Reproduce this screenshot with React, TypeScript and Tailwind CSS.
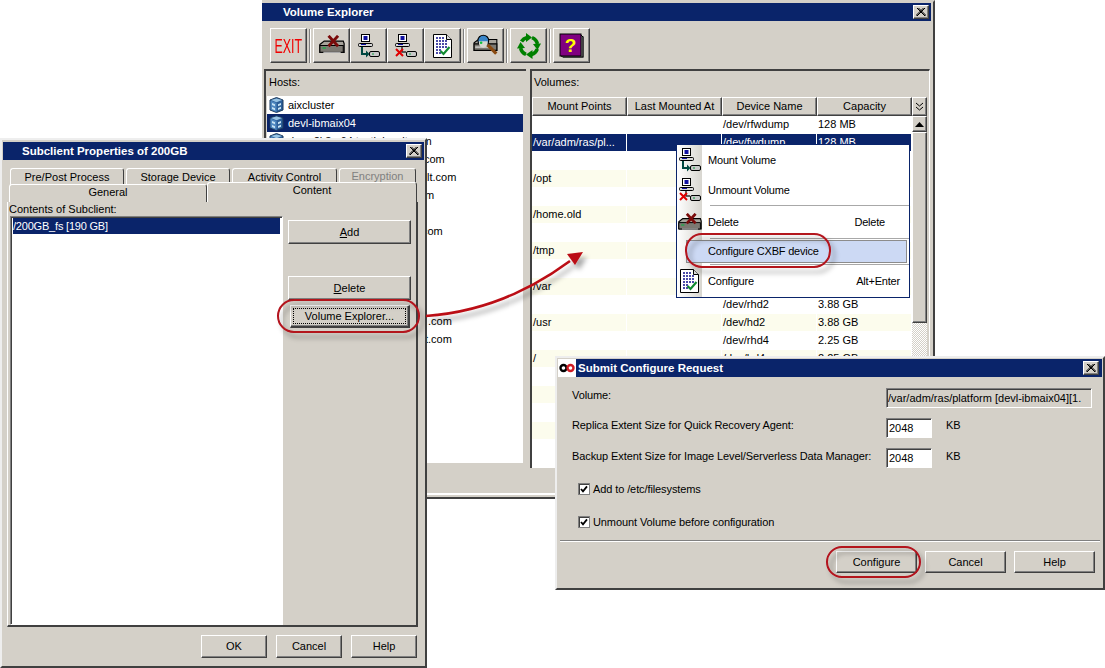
import type { ReactNode } from 'react'

const raised = 'bg-[#d4d0c8] border border-t-white border-l-white border-r-[#404040] border-b-[#404040] shadow-[inset_-1px_-1px_0_#808080]'
const sunken = 'border border-t-[#808080] border-l-[#808080] border-r-white border-b-white shadow-[inset_1px_1px_0_#404040]'

function Btn({ className = '', children }: { className?: string; children?: ReactNode }) {
  return <div className={`flex shrink-0 items-center justify-center ${raised} ${className}`}>{children}</div>
}

function CloseBtn({ className = '' }: { className?: string }) {
  return (
    <Btn className={`h-[14px] w-[16px] ${className}`}>
      <svg width="10" height="8" viewBox="0 0 10 8">
        <path d="M1 0l8 8M2.5 0l8 8M9 0L1 8M7.5 0l-8 8" stroke="#000" strokeWidth="1" />
      </svg>
    </Btn>
  )
}

function DriveX({ size = 28 }: { size?: number }) {
  return (
    <svg width={size} height={size * 0.8} viewBox="0 0 30 24">
      <path d="M1 11L6 7h22l1 3v10H1z" fill="#a8a49c" stroke="#000" strokeWidth="1.4" />
      <path d="M1 12h27v8H1z" fill="#7c7972" stroke="#000" strokeWidth="1.2" />
      <path d="M4 15h4" stroke="#10b040" strokeWidth="1.5" />
      <path d="M5 20h20" stroke="#e8e8e8" strokeWidth="1" />
      <path d="M11 1l11 12M22 1L11 13" stroke="#7a0a0a" strokeWidth="3.4" />
    </svg>
  )
}

function MountIcon({ x = false }: { x?: boolean }) {
  return (
    <svg width="22" height="24" viewBox="0 0 22 24">
      <rect x="3.5" y="0.5" width="8" height="7" fill="#fff" stroke="#000" />
      <rect x="5.5" y="2" width="4" height="4" fill="#1010a0" />
      <rect x="0.5" y="9.5" width="14" height="3" rx="1" fill="#d8d8d8" stroke="#000" />
      <path d="M3 10.5h5" stroke="#1010a0" />
      <rect x="11.5" y="17.5" width="10" height="5" rx="1.5" fill="#c8c8c8" stroke="#000" />
      <path d="M14 20h2" stroke="#10a040" />
      {x ? (
        <>
          <path d="M7 13v5h4" fill="none" stroke="#333" strokeWidth="1.5" />
          <path d="M1 15l7 7M8 15l-7 7" stroke="#e00000" strokeWidth="2" />
        </>
      ) : (
        <>
          <path d="M4 13v7h5" fill="none" stroke="#004840" strokeWidth="2" />
          <path d="M8 16.5v7l3.5-3.5z" fill="#004840" />
        </>
      )}
    </svg>
  )
}

function DocIcon() {
  return (
    <svg width="19" height="24" viewBox="0 0 19 24">
      <path d="M0.5 0.5h13l5 5v18H0.5z" fill="#fff" stroke="#000" />
      <path d="M13.5 0.5v5h5" fill="#ddd" stroke="#000" />
      <path d="M3 4h8M3 7h12M3 10h12M3 13h12M3 16h6M3 19h5" stroke="#10108a" strokeWidth="1.4" strokeDasharray="2 1" />
      <path d="M7.5 17l3 3 6-7" fill="none" stroke="#108a30" strokeWidth="2.2" />
    </svg>
  )
}

function SearchIcon() {
  return (
    <svg width="24" height="24" viewBox="0 0 24 24" className="h-[26px] w-[26px]">
      <path d="M1 9L5 6h17v10H1z" fill="#a8a49c" stroke="#000" />
      <path d="M1 10h21v6H1z" fill="#7c7972" stroke="#000" />
      <path d="M2 13h14" stroke="#e8e8e8" />
      <circle cx="9.5" cy="7" r="5" fill="#3a86c8" stroke="#000" />
      <path d="M5.5 7.5h8v2a4 4 0 0 1-8 0z" fill="#d8d8d0" />
      <circle cx="7.5" cy="9" r="1.2" fill="#10c040" />
      <path d="M13.5 11l8 8" stroke="#8a4a10" strokeWidth="3" />
    </svg>
  )
}

function RefreshIcon() {
  return (
    <svg width="24" height="26" viewBox="0 0 24 26">
      <g fill="none" stroke="#008000" strokeWidth="3.6">
        <path d="M4.5 8.5A9 9 0 0 1 10 4.4" />
        <path d="M15 4.6A9 9 0 0 1 20.5 11" />
        <path d="M20.3 16A9 9 0 0 1 14.5 21.6" />
        <path d="M9 21.4A9 9 0 0 1 3.6 15" />
      </g>
      <g fill="#008000">
        <path d="M9 0l6 4.5L9 9z" />
        <path d="M24 10.5l-3.5 6.5-4.5-6z" />
        <path d="M15.5 26l-6.5-4.5 6.5-4.5z" />
        <path d="M0 15.5l3.5-6.5 4.5 6z" />
      </g>
    </svg>
  )
}

function HelpBook() {
  return (
    <svg width="26" height="26" viewBox="0 0 26 26">
      <rect x="4" y="3" width="21" height="22" fill="#808080" />
      <rect x="1" y="1" width="21" height="22" fill="#800080" stroke="#000" />
      <path d="M22 2l2 2v20H4l-2-1" fill="none" stroke="#000" />
      <text x="11.5" y="19" textAnchor="middle" fontSize="19" fontWeight="700" fill="#ffff00" fontFamily="Liberation Sans">?</text>
    </svg>
  )
}

function HostIcon() {
  return (
    <svg width="15" height="16" viewBox="0 0 15 16" className="shrink-0">
      <path d="M7.5 0.5L14 3v10l-6.5 2.5L1 13V3z" fill="#2c5f98" stroke="#1c3a5c" />
      <path d="M1.5 3.5l6 2.5v9l-6-2.5z" fill="#4f88c0" />
      <path d="M7.5 1.5L13 3 7.5 5.2 2 3z" fill="#98c4e4" />
      <path d="M3 6l3 1.2v2L3 8zM9 7.2l3-1.2v2L9 9.2zM9 11l3-1.2v2L9 13zM3 10l3 1.2v2L3 12z" fill="#c8e4f4" />
    </svg>
  )
}

function Logo() {
  return (
    <div className="flex h-[18px] w-[18px] shrink-0 items-center justify-center bg-white">
      <svg width="16" height="10" viewBox="0 0 16 10">
        <circle cx="4.5" cy="5" r="3" fill="none" stroke="#000" strokeWidth="2.4" />
        <circle cx="11.5" cy="5" r="3" fill="none" stroke="#d01c24" strokeWidth="2.4" />
      </svg>
    </div>
  )
}

function ToolSep() {
  return <div className="mx-[2px] h-[34px] w-[2px] shrink-0 border-l border-r border-l-[#808080] border-r-white" />
}

function Toolbar() {
  const tb = 'h-[35px] w-[37px]'
  return (
    <div className="ml-[8px] mt-[7px] flex h-[35px] items-center">
      <Btn className={tb}>
        <span className="origin-center scale-x-[0.62] text-[20px] leading-none text-[#f00000]">EXIT</span>
      </Btn>
      <ToolSep />
      <Btn className={tb}><DriveX size={26} /></Btn>
      <Btn className={tb}><MountIcon /></Btn>
      <Btn className={tb}><MountIcon x /></Btn>
      <Btn className={tb}><DocIcon /></Btn>
      <ToolSep />
      <Btn className={tb}><SearchIcon /></Btn>
      <ToolSep />
      <Btn className={tb}><RefreshIcon /></Btn>
      <ToolSep />
      <Btn className={tb}><HelpBook /></Btn>
    </div>
  )
}

const hostFragments = [
  { text: 'com', pad: 'pl-[157px]' },
  { text: 'lt.com', pad: 'pl-[160px]' },
  { text: 'm', pad: 'pl-[158px]' },
  { text: '', pad: '' },
  { text: 'com', pad: 'pl-[155px]' },
  { text: '', pad: '' },
  { text: '', pad: '' },
  { text: '', pad: '' },
  { text: '', pad: '' },
  { text: '.com', pad: 'pl-[161px]' },
  { text: 't.com', pad: 'pl-[158px]' },
]

function HostsPane() {
  return (
    <div className="flex h-[399px] w-[262px] flex-col border-l-2 border-t-2 border-l-[#404040] border-t-[#404040]">
      <div className="flex h-[25px] items-center pb-[3px] pl-[3px]">Hosts:</div>
      <div className="ml-[1px] mr-[1px] flex h-[369px] flex-col overflow-hidden border-b-2 border-r-2 border-b-[#d4d0c8] border-r-[#d4d0c8] bg-white">
        <div className="flex h-[18px] shrink-0 items-center gap-[4px] pl-[2px]"><HostIcon />aixcluster</div>
        <div className="flex h-[18px] shrink-0 items-center gap-[4px] bg-[#0a246a] pl-[2px] text-white"><HostIcon />devl-ibmaix04</div>
        <div className="flex h-[18px] shrink-0 items-center gap-[4px] whitespace-nowrap pl-[2px]"><HostIcon />devw2k3-x64.testlab.cvlt.com</div>
        {hostFragments.map((h, i) => (
          <div key={i} className={`flex h-[18px] shrink-0 items-center ${h.pad}`}>{h.text}</div>
        ))}
      </div>
    </div>
  )
}

const volumeRows = [
  ['', '', '/dev/rfwdump', '128 MB'],
  ['/var/adm/ras/pl...', '', '/dev/fwdump', '128 MB'],
  ['', '', '', ''],
  ['/opt', '', '', ''],
  ['', '', '', ''],
  ['/home.old', '', '', ''],
  ['', '', '', ''],
  ['/tmp', '', '', ''],
  ['', '', '', ''],
  ['/var', '', '', ''],
  ['', '', '/dev/rhd2', '3.88 GB'],
  ['/usr', '', '/dev/hd2', '3.88 GB'],
  ['', '', '/dev/rhd4', '2.25 GB'],
  ['/', '', '/dev/hd4', '2.25 GB'],
  ['', '', '', ''],
  ['', '', '', ''],
  ['', '', '', ''],
  ['', '', '', ''],
  ['', '', '', ''],
]

function VolumesPane() {
  const columns = ['Mount Points', 'Last Mounted At', 'Device Name', 'Capacity']
  return (
    <div className="ml-[4px] flex h-[399px] w-[400px] flex-col border-l-2 border-r border-t-2 border-l-[#404040] border-r-white border-t-[#404040]">
      <div className="flex h-[26px] items-center pb-[3px] pl-[2px]">Volumes:</div>
      <div className="flex h-[371px] flex-col overflow-hidden">
        <div className="flex h-[19px] shrink-0">
          {columns.map((c) => (
            <Btn key={c} className="h-[19px] w-[95px]">{c}</Btn>
          ))}
          <Btn className="h-[19px] w-[15px]">
            <svg width="9" height="9" viewBox="0 0 9 9"><path d="M1 1l3.5 3L8 1M1 5l3.5 3L8 5" fill="none" stroke="#000" /></svg>
          </Btn>
        </div>
        <div className="flex min-h-0 flex-1">
          <div className="w-[380px] overflow-hidden bg-white">
            {volumeRows.map((r, i) => (
              <div key={i} className={`flex h-[18px] items-stretch border-b border-white ${i === 1 ? 'bg-[#0a246a] text-white' : i % 2 === 1 ? 'bg-[#fcfced]' : 'bg-white'}`}>
                {r.map((c, j) => (
                  <div key={j} className="flex w-[95px] items-center border-r border-white pl-[1px]">{c}</div>
                ))}
              </div>
            ))}
          </div>
          <div className="flex w-[15px] flex-col bg-[repeating-conic-gradient(#d4d0c8_0_25%,#ffffff_0_50%)] bg-[length:2px_2px]">
            <Btn className="h-[16px]">
              <svg width="9" height="5" viewBox="0 0 9 5"><path d="M4.5 0L9 5H0z" fill="#000" /></svg>
            </Btn>
            <Btn className="h-[191px]" />
          </div>
        </div>
      </div>
    </div>
  )
}

function VolumeExplorer() {
  return (
    <div className="absolute left-[262px] top-0 flex h-[499px] w-[673px] flex-col border-b-2 border-r-2 border-t-2 border-b-[#404040] border-r-[#404040] border-t-[#d4d0c8] bg-[#d4d0c8] pr-[2px] pt-[1px]">
      <div className="flex h-[18px] shrink-0 items-center justify-between bg-[#0a246a] pl-[21px] pr-[2px] text-white">
        <span className="pt-[1px] text-[11.5px] font-bold">Volume Explorer</span>
        <CloseBtn />
      </div>
      <Toolbar />
      <div className="ml-[2px] mt-[6px] flex">
        <HostsPane />
        <VolumesPane />
      </div>
      <div className="mt-[25px] h-[2px] shrink-0 bg-white" />
    </div>
  )
}

function ContextMenu() {
  const strip = 'flex w-[25px] shrink-0 items-center justify-center'
  const sep = 'ml-[33px] h-[1px] bg-[#a8a8a8]'
  return (
    <div className="absolute left-[676px] top-[144px] h-[154px] w-[234px] overflow-hidden border border-[#0a246a] bg-white tracking-[-0.2px]">
      <div className="absolute bottom-0 left-0 top-0 w-[25px] bg-gradient-to-r from-white to-[#d8d6d0]" />
      <div className="relative flex h-full flex-col">
        <div className="flex h-[30px] items-center"><div className={strip}><MountIcon /></div><span className="ml-[6px]">Mount Volume</span></div>
        <div className="flex h-[30px] items-center"><div className={strip}><MountIcon x /></div><span className="ml-[6px]">Unmount Volume</span></div>
        <div className={sep} />
        <div className="flex h-[32px] items-center pt-[1px]"><div className={strip}><DriveX size={24} /></div><span className="ml-[6px]">Delete</span><span className="ml-auto mr-[24px]">Delete</span></div>
        <div className={sep} />
        <div className="ml-[9px] mr-[2px] mt-[1px] flex h-[23px] items-center border border-[#8c8c8c] bg-[#ccd9f4] pl-[21px]">Configure CXBF device</div>
        <div className={`${sep} mt-[1px]`} />
        <div className="flex h-[31px] items-center pt-[1px]"><div className={strip}><DocIcon /></div><span className="ml-[6px]">Configure</span><span className="ml-auto mr-[9px]">Alt+Enter</span></div>
      </div>
    </div>
  )
}

function Tab({ className = '', children, disabled }: { className?: string; children: ReactNode; disabled?: boolean }) {
  return (
    <div className={`flex items-start justify-center rounded-t-[3px] border-l border-r border-t border-l-white border-r-[#404040] border-t-white bg-[#d4d0c8] ${disabled ? 'text-[#808080]' : ''} ${className}`}>
      {children}
    </div>
  )
}

function Subclient() {
  const foot = 'h-[23px] w-[66px]'
  return (
    <div className="absolute left-0 top-[138px] flex h-[530px] w-[427px] flex-col border-2 border-b-[#404040] border-l-[#eeeeee] border-r-[#404040] border-t-[#eeeeee] bg-[#d4d0c8] p-[1px] pt-[2px]">
      <div className="flex h-[18px] shrink-0 items-center justify-between bg-[#0a246a] pl-[19px] pr-[2px] text-white">
        <span className="pt-[1px] text-[11.5px] font-bold">Subclient Properties of 200GB</span>
        <CloseBtn />
      </div>
      <div className="relative ml-[7px] mt-[8px] flex h-[17px] gap-[2px]">
        <Tab className="h-[17px] w-[114px] pt-[3px]">Pre/Post Process</Tab>
        <Tab className="h-[17px] w-[104px] pt-[3px]">Storage Device</Tab>
        <Tab className="h-[17px] w-[105px] pt-[3px]">Activity Control</Tab>
        <Tab className="h-[17px] w-[77px] pt-[2px]" disabled>Encryption</Tab>
      </div>
      <div className="relative ml-[6px] mt-[-3px] flex h-[20px] items-end">
        <Tab className="h-[18px] w-[198px] pt-[2px]">General</Tab>
        <Tab className="h-[20px] w-[210px] pt-[2px]">Content</Tab>
      </div>
      <div className="ml-[4px] flex h-[425px] w-[411px] flex-col border-b-2 border-l border-r-2 border-b-[#404040] border-l-white border-r-[#404040]">
        <div className="flex h-[14px] shrink-0 items-center pl-[1px]">Contents of Subclient:</div>
        <div className="flex">
          <div className={`ml-[2px] h-[409px] w-[273px] bg-white p-[2px] pt-[1px] ${sunken}`}>
            <div className="flex h-[16px] items-center bg-[#0a246a] tracking-[-0.2px] text-white">/200GB_fs [190 GB]</div>
          </div>
          <div className="ml-[5px] flex flex-col">
            <Btn className="mt-[4px] h-[24px] w-[123px]"><span><span className="underline">A</span>dd</span></Btn>
            <Btn className="mt-[32px] h-[24px] w-[123px]"><span><span className="underline">D</span>elete</span></Btn>
            <Btn className="ml-[2px] mt-[5px] h-[23px] w-[120px] border-b-2 border-r-2 border-b-[#404040] border-r-[#404040] p-[2px]">
              <div className="flex h-full w-full items-center justify-center border border-dotted border-black">Volume Explorer...</div>
            </Btn>
          </div>
        </div>
      </div>
      <div className="mt-[8px] flex justify-end gap-[9px] pr-[7px]">
        <Btn className={foot}>OK</Btn>
        <Btn className={foot}>Cancel</Btn>
        <Btn className={foot}>Help</Btn>
      </div>
    </div>
  )
}

function SubmitDialog() {
  const foot = 'h-[22px] w-[81px]'
  const label = 'w-[328px] shrink-0 whitespace-nowrap pl-[14px] tracking-[-0.1px]'
  const input = `flex h-[20px] w-[46px] items-center bg-white pl-[2px] ${sunken}`
  const check = 'flex h-[12px] w-[12px] shrink-0 items-center justify-center border border-[#808080] bg-white shadow-[inset_1px_1px_0_#404040]'
  const tick = <svg width="8" height="8" viewBox="0 0 8 8"><path d="M1 4l2 2.4L7 1.4" fill="none" stroke="#000" strokeWidth="1.8" /></svg>
  return (
    <div className="absolute left-[555px] top-[356px] flex h-[234px] w-[550px] flex-col border-2 border-b-[#404040] border-l-[#eeeeee] border-r-[#404040] border-t-[#eeeeee] bg-[#d4d0c8] p-[1px]">
      <div className="flex h-[18px] shrink-0 items-center justify-between bg-[#0a246a] pr-[3px] text-white">
        <div className="flex items-center gap-[2px]">
          <Logo />
          <span className="pt-[1px] text-[11.5px] font-bold">Submit Configure Request</span>
        </div>
        <CloseBtn className="h-[13px] w-[15px]" />
      </div>
      <div className="mt-[11px] flex items-start">
        <div className={`${label} pt-[2px]`}>Volume:</div>
        <div className={`flex h-[20px] w-[206px] items-center overflow-hidden whitespace-nowrap pl-[1px] ${sunken}`}>/var/adm/ras/platform [devl-ibmaix04][1.</div>
      </div>
      <div className="mt-[10px] flex items-start">
        <div className={`${label} pt-[2px]`}>Replica Extent Size for Quick Recovery Agent:</div>
        <div className={input}>2048</div>
        <div className="ml-[14px] pt-[2px]">KB</div>
      </div>
      <div className="mt-[10px] flex items-start">
        <div className={`${label} pt-[3px]`}>Backup Extent Size for Image Level/Serverless Data Manager:</div>
        <div className={input}>2048</div>
        <div className="ml-[14px] pt-[3px]">KB</div>
      </div>
      <div className="ml-[20px] mt-[15px] flex items-center gap-[3px] tracking-[-0.1px]"><div className={check}>{tick}</div>Add to /etc/filesystems</div>
      <div className="ml-[20px] mt-[21px] flex items-center gap-[3px] tracking-[-0.1px]"><div className={check}>{tick}</div>Unmount Volume before configuration</div>
      <div className="mx-[2px] mt-[12px] h-[2px] border-b border-t border-b-white border-t-[#808080]" />
      <div className="mt-[9px] flex justify-end gap-[8px] pr-[7px]">
        <Btn className={foot}>Configure</Btn>
        <Btn className={foot}>Cancel</Btn>
        <Btn className={foot}>Help</Btn>
      </div>
    </div>
  )
}

function Annotations() {
  return (
    <svg width="1105" height="668" viewBox="0 0 1105 668" className="pointer-events-none absolute left-0 top-0">
      <defs>
        <filter id="callout-shadow" x="-20%" y="-40%" width="150%" height="200%">
          <feDropShadow dx="4" dy="5" stdDeviation="2.5" floodColor="#000" floodOpacity="0.35" />
        </filter>
      </defs>
      <g filter="url(#callout-shadow)">
        <rect x="278" y="300" width="141" height="32" rx="16" fill="none" stroke="#b3121d" strokeWidth="2" />
        <rect x="686" y="234" width="144" height="33" rx="16" fill="none" stroke="#b3121d" strokeWidth="2" />
        <rect x="827" y="547" width="93" height="30" rx="15" fill="none" stroke="#b3121d" strokeWidth="2" />
        <path d="M426 316C470 313 520 298 570 261" fill="none" stroke="#bb0f14" strokeWidth="2.6" />
        <path d="M583 252L567 254 575 265z" fill="#bb0f14" />
      </g>
    </svg>
  )
}

export default function App() {
  return (
    <div className="relative h-[668px] w-[1105px] overflow-hidden bg-white font-['Liberation_Sans',sans-serif] text-[11px] leading-none text-black">
      <VolumeExplorer />
      <ContextMenu />
      <Subclient />
      <SubmitDialog />
      <Annotations />
    </div>
  )
}
